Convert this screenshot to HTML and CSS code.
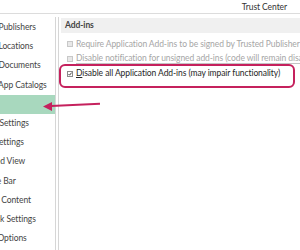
FILE: index.html
```html
<!DOCTYPE html>
<html lang="en">
<head>
    <meta charset="UTF-8">
    <title>Trust Center</title>
    <link rel="stylesheet" href="styles.css">
</head>
<body>
    <div class="titlebar">Trust Center</div>

    <div class="main">
        <!-- Category list -->
        <ul class="sidebar">
            <li>Trusted Publishers</li>
            <li>Trusted Locations</li>
            <li>Trusted Documents</li>
            <li>Trusted App Catalogs</li>
            <li class="selected">Add-ins</li>
            <li>ActiveX Settings</li>
            <li>Macro Settings</li>
            <li>Protected View</li>
            <li>Message Bar</li>
            <li>External Content</li>
            <li>File Block Settings</li>
            <li>Privacy Options</li>
        </ul>

        <!-- Settings panel -->
        <div class="panel">
            <div class="section-title">Add-ins</div>
            <div class="option disabled first">
                <span class="box"></span>
                <span><u>R</u>equire Application Add-ins to be signed by Trusted Publisher</span>
            </div>
            <div class="option disabled cut">
                <span class="box"></span>
                <span>Disable <u>n</u>otification for unsigned add-ins (code will remain disabled)</span>
            </div>
            <div class="option highlight">
                <svg class="check" width="6" height="6" viewBox="0 0 6 6">
                    <rect x="0.5" y="0.5" width="5" height="5" fill="#fff" stroke="#8c8c8c"/>
                    <path d="M1.5 3 L2.6 4.2 L4.6 1.6" fill="none" stroke="#333" stroke-width="0.9"/>
                </svg>
                <span><u>D</u>isable all Application Add-ins (may impair functionality)</span>
            </div>
        </div>
    </div>

    <!-- annotation arrow -->
    <svg class="arrow" width="300" height="250" viewBox="0 0 300 250">
        <path d="M51 106 L100 103.8" stroke="#c5215d" stroke-width="2" fill="none"/>
        <path d="M43 106.5 L52 102 L52 111 Z" fill="#c5215d"/>
    </svg>
</body>
</html>
```

FILE: styles.css
```css
body {
    margin: 0;
    width: 300px;
    height: 250px;
    overflow: hidden;
    position: relative;
    background: #fff;
    font-family: Lato, "Liberation Sans", sans-serif;
    font-size: 8.5px;
    letter-spacing: -0.08px;
    color: #444;
}
.titlebar {
    height: 13px;
    line-height: 14px;
    border-bottom: 1px solid #dcdcdc;
    display: flex;
    justify-content: flex-end;
    padding-right: 13px;
    color: #333;
}
.main {
    display: flex;
    margin-top: 3px;
}
.sidebar {
    list-style: none;
    margin: 0;
    padding: 1px 0 0;
    width: 55px;
    flex: none;
    overflow: hidden;
    border-right: 1px solid #d6d6d6;
    height: 240px;
}
.sidebar li {
    height: 19.2px;
    line-height: 19.2px;
    white-space: nowrap;
    text-indent: -31px;
    color: #444;
}
.sidebar li.selected {
    background: #a8d8be;
    color: transparent;
}
.panel {
    flex: 1;
    margin-left: 2px;
    border-left: 1px solid #d6d6d6;
    padding-left: 2px;
    min-width: 0;
}
.section-title {
    margin-top: 1px;
    height: 15px;
    line-height: 15px;
    background: #f0f0f0;
    font-weight: bold;
    padding-left: 4px;
    color: #444;
}
.option {
    display: flex;
    align-items: center;
    gap: 3px;
    height: 15px;
    padding-left: 6px;
    white-space: nowrap;
    color: #262626;
}
.option.first {
    margin-top: 3px;
}
.option.disabled {
    color: #a6a6a6;
}
.option.disabled u {
    text-decoration: none;
}
.option.cut span:last-child {
    border-bottom: 1px solid #c4c4c4;
    line-height: 9px;
}
.box {
    width: 4px;
    height: 4px;
    flex: none;
    border: 1px solid #c8c8c8;
    background: #e8e8e8;
}
.check {
    flex: none;
}
.option.highlight {
    margin-top: -2px;
    margin-left: -2px;
    width: 226px;
    height: 16px;
    align-items: flex-start;
    padding-top: 2px;
    padding-bottom: 2px;
    border: 2px solid #c5215d;
    border-radius: 6px;
}
.option.highlight .check {
    margin-top: 3px;
}
.arrow {
    position: absolute;
    left: 0;
    top: 0;
}
```
